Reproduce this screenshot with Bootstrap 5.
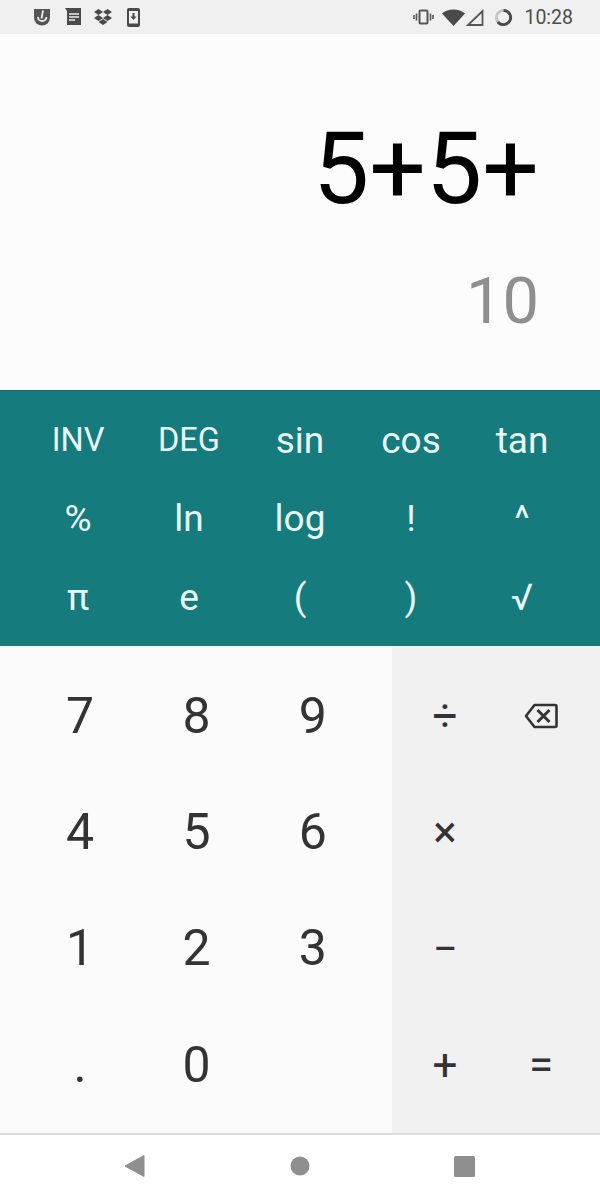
<!DOCTYPE html>
<html lang="en">
<head>
<meta charset="utf-8">
<title>Calculator</title>
<link href="https://cdn.jsdelivr.net/npm/bootstrap@5.3.0/dist/css/bootstrap.min.css" rel="stylesheet">
<style>
  html, body { margin: 0; background: #fff; }
  body { font-family: Roboto, "Liberation Sans", sans-serif; width: 600px; height: 1200px; overflow: hidden; }
  .phone { height: 1200px; }
  .status-strip { height: 34px; background: #f0f0f0; color: #4a4a4a; }
  .status-left { padding-left: 33px; }
  .status-right { padding-right: 27px; }
  .clock { font-size: 19.500px; margin-left: 11px; line-height: 34px; padding-top: 1px; color: #4d4d4d; }
  .readout { height: 356px; background: #fcfcfc; padding-right: 61px; }
  .expr { font-size: 100px; line-height: 1; color: #000; margin-top: 85px; }
  .answer { font-size: 65px; line-height: 1; color: #8f8f8f; margin-top: 50px; }
  .science { height: 256px; background: #167b7d; border-top: 1px solid #11696b; padding: 10px 22.500px 10px; color: #e8f6f6; display: grid; grid-template-columns: repeat(5, 111px); grid-auto-rows: 78.500px; }
  .science > div { display: flex; align-items: center; justify-content: center; font-size: 37px; }
  .science > div.narrow { font-size: 32.500px; }
  .keypad { height: 487px; }
  .digits { width: 392px; background: #fbfbfb; padding: 12px 22px 9px; display: grid; grid-template-columns: repeat(3, 116.300px); grid-auto-rows: 116.300px; }
  .ops { width: 208px; background: #f1f1f1; padding: 12px 11px 9px 5px; display: grid; grid-template-columns: repeat(2, 96px); grid-auto-rows: 116.300px; }
  .digits > div, .ops > div { display: flex; align-items: center; justify-content: center; color: #333; font-size: 50px; }
  .ops > div { font-size: 44px; }
  .softkeys { height: 67px; background: #fff; border-top: 2px solid #dcdcdc; padding: 0 125px 3px 124px; }
</style>
</head>
<body>
<div class="phone d-flex flex-column">
  <div class="status-strip d-flex justify-content-between align-items-center">
    <div class="status-left d-flex align-items-center">
      <!-- notification glyphs -->
      <svg width="18" height="18" viewBox="0 0 18 18"><path d="M1 1h16v8.500a8 8 0 0 1-16 0z" fill="#555"/><path d="M5 9a4.200 4.200 0 1 0 8.400 0" fill="none" stroke="#f0f0f0" stroke-width="1.800"/><path d="M10 2.500 8.500 10.500" fill="none" stroke="#f0f0f0" stroke-width="1.800"/></svg>
      <svg style="margin-left:14px" width="17" height="18" viewBox="0 0 17 18"><path d="M0 0h16v17H2V3z" fill="#4a4a4a"/><path d="M4 6h10M4 9h10M4 12h6" stroke="#f0f0f0" stroke-width="1.600"/></svg>
      <svg style="margin-left:11px" width="20" height="18" viewBox="0 0 20 18" fill="#4a4a4a"><path d="M5.500 1 10 4 5.500 7 1 4zM14.500 1 19 4l-4.500 3L10 4zM5.500 7 10 10l-4.500 3L1 10zM14.500 7 19 10l-4.500 3L10 10zM5.500 14 10 11l4.500 3L10 17z"/></svg>
      <svg style="margin-left:14px" width="13" height="19" viewBox="0 0 13 19"><rect width="13" height="19" rx="2" fill="#4a4a4a"/><rect x="2" y="3" width="9" height="12.500" fill="#f0f0f0"/><path d="M5.500 5h2v3.500h2l-3 3.500-3-3.500h2z" fill="#4a4a4a"/></svg>
    </div>
    <div class="status-right d-flex align-items-center">
      <!-- vibrate, wifi, signal, battery ring -->
      <svg width="21" height="16" viewBox="0 0 21 16" fill="none" stroke="#555"><rect x="6.500" y="1.500" width="8" height="13" rx="1" stroke-width="2"/><path d="M3.500 4.500v7M1 6v4M17.500 4.500v7M20 6v4" stroke-width="1.600"/></svg>
      <svg style="margin-left:8px" width="23" height="17" viewBox="0 0 23 17"><path d="M0 4.500C3 1.800 7 .5 11.500 .5s8.500 1.300 11.500 4L11.500 17z" fill="#4a4a4a"/></svg>
      <svg style="margin-left:1px" width="18" height="17" viewBox="0 0 18 17"><path d="M16.500 2v14H2z" fill="#f0f0f0" stroke="#555" stroke-width="1.800"/></svg>
      <svg style="margin-left:10px" width="19" height="19" viewBox="0 0 20 20" fill="none" stroke-width="3"><circle cx="10" cy="10" r="7.500" stroke="#c4c4c4"/><path d="M10 2.500a7.500 7.500 0 1 1-6 12" stroke="#4a4a4a"/></svg>
      <span class="clock">10:28</span>
    </div>
  </div>

  <div class="readout d-flex flex-column align-items-end">
    <div class="expr">5+5+</div>
    <div class="answer">10</div>
  </div>

  <div class="science">
    <div class="narrow">INV</div><div class="narrow">DEG</div><div>sin</div><div>cos</div><div>tan</div>
    <div>%</div><div>ln</div><div>log</div><div>!</div><div>^</div>
    <div>π</div><div>e</div><div>(</div><div>)</div><div>√</div>
  </div>

  <div class="keypad d-flex">
    <div class="digits">
      <div>7</div><div>8</div><div>9</div>
      <div>4</div><div>5</div><div>6</div>
      <div>1</div><div>2</div><div>3</div>
      <div>.</div><div>0</div><div></div>
    </div>
    <div class="ops">
      <div>÷</div>
      <div>
        <svg width="34" height="26" viewBox="0 0 34 26" fill="none" stroke="#333"><path d="M10.500 2H31a1.500 1.500 0 0 1 1.500 1.500v19A1.500 1.500 0 0 1 31 24H10.500L2 13z" stroke-width="2.600" stroke-linejoin="round"/><path d="M13.500 7l12 12M25.500 7l-12 12" stroke-width="3"/></svg>
      </div>
      <div>×</div><div></div>
      <div>−</div><div></div>
      <div>+</div><div>=</div>
    </div>
  </div>

  <div class="softkeys d-flex justify-content-between align-items-center">
    <svg width="22" height="24" viewBox="0 0 22 24"><path d="M20 1.500v21L1 12z" fill="#8f8f8f" stroke="#8f8f8f" stroke-linejoin="round"/></svg>
    <svg width="20" height="20" viewBox="0 0 20 20"><circle cx="10" cy="10" r="9.500" fill="#8f8f8f"/></svg>
    <svg width="21" height="21" viewBox="0 0 21 21"><rect width="21" height="21" rx="1.500" fill="#8f8f8f"/></svg>
  </div>
</div>
<script src="https://cdn.jsdelivr.net/npm/bootstrap@5.3.0/dist/js/bootstrap.bundle.min.js"></script>
</body>
</html>
